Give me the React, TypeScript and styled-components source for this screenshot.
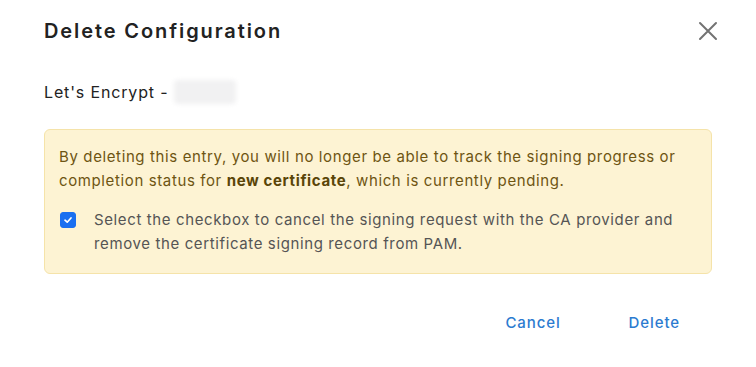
import React, { useState } from "react";
import styled, { createGlobalStyle } from "styled-components";

const GlobalStyle = createGlobalStyle`
  html, body {
    margin: 0;
    padding: 0;
    background: #ffffff;
  }
  body {
    font-family: Inter, "Open Sans", "Liberation Sans", sans-serif;
  }
`;

export default function App() {
  const [checked, setChecked] = useState(true);

  return (
    <>
      <GlobalStyle />
      <SDialog>
        <SHeader>
          <STitle>Delete Configuration</STitle>
          <SCloseButton aria-label="Close">
            <svg width="20" height="20" viewBox="0 0 20 20">
              <path d="M2 2 L18 18 M18 2 L2 18" stroke="#737373" strokeWidth="2" strokeLinecap="round" />
            </svg>
          </SCloseButton>
        </SHeader>

        <SName>
          Let's Encrypt - <SBlurred />
        </SName>

        <SAlert>
          <SAlertText>
            By deleting this entry, you will no longer be able to track the signing progress or
            completion status for <strong>new certificate</strong>, which is currently pending.
          </SAlertText>
          <SCheckRow>
            <SCheckbox $checked={checked} onClick={() => setChecked(!checked)}>
              {checked && (
                <svg width="10" height="10" viewBox="0 0 10 10">
                  <path d="M2 5.2 L4.2 7.2 L8 3" fill="none" stroke="#fff" strokeWidth="1.7" strokeLinecap="round" strokeLinejoin="round" />
                </svg>
              )}
            </SCheckbox>
            <SCheckLabel>
              Select the checkbox to cancel the signing request with the CA provider and remove
              the certificate signing record from PAM.
            </SCheckLabel>
          </SCheckRow>
        </SAlert>

        <SFooter>
          <SActionButton>Cancel</SActionButton>
          <SActionButton>Delete</SActionButton>
        </SFooter>
      </SDialog>
    </>
  );
}

const SDialog = styled.div`
  width: 756px;
  height: 367px;
  box-sizing: border-box;
  padding: 16px 44px 0 44px;
  display: flex;
  flex-direction: column;
`;

const SHeader = styled.div`
  display: flex;
  justify-content: space-between;
  align-items: center;
  height: 30px;
`;

const STitle = styled.h2`
  margin: 0;
  font-size: 20px;
  font-weight: 600;
  color: #222222;
  letter-spacing: 1.9px;
`;

const SCloseButton = styled.button`
  border: none;
  background: none;
  padding: 0;
  margin-right: -6px;
  display: flex;
  cursor: pointer;
`;

const SName = styled.div`
  margin-top: 33px;
  display: flex;
  align-items: center;
  gap: 6px;
  font-size: 16px;
  letter-spacing: 0.85px;
  color: #222222;
  height: 26px;
`;

const SBlurred = styled.span`
  display: inline-block;
  width: 62px;
  height: 24px;
  border-radius: 4px;
  background: #f1f1f2;
  filter: blur(2px);
`;

const SAlert = styled.div`
  margin-top: 24px;
  background: #fdf3d3;
  border: 1px solid #f5e3a9;
  border-radius: 6px;
  padding: 15px 18px 17px 14px;
  display: flex;
  flex-direction: column;
  gap: 15px;
`;

const SAlertText = styled.p`
  margin: 0;
  font-size: 15px;
  line-height: 24px;
  letter-spacing: 0.62px;
  color: #6e5512;

  strong {
    font-weight: 700;
    color: #5a4508;
  }
`;

const SCheckRow = styled.div`
  display: flex;
  align-items: flex-start;
  gap: 18px;
`;

const SCheckbox = styled.span<{ $checked: boolean }>`
  flex: none;
  width: 16px;
  height: 16px;
  margin-top: 4px;
  margin-left: 1px;
  border-radius: 3px;
  box-sizing: border-box;
  background: ${(p) => (p.$checked ? "#1a6ff0" : "#fff")};
  border: 1px solid ${(p) => (p.$checked ? "#1a6ff0" : "#999")};
  display: flex;
  align-items: center;
  justify-content: center;
  cursor: pointer;
`;

const SCheckLabel = styled.span`
  font-size: 15px;
  line-height: 24px;
  letter-spacing: 0.62px;
  color: #555555;
`;

const SFooter = styled.div`
  margin-top: 33px;
  display: flex;
  justify-content: flex-end;
  gap: 24px;
  padding-right: 10px;
`;

const SActionButton = styled.button`
  border: none;
  background: none;
  font-family: inherit;
  font-size: 15px;
  font-weight: 500;
  letter-spacing: 0.9px;
  color: #2b7bd0;
  padding: 6px 22px;
  cursor: pointer;
`;
